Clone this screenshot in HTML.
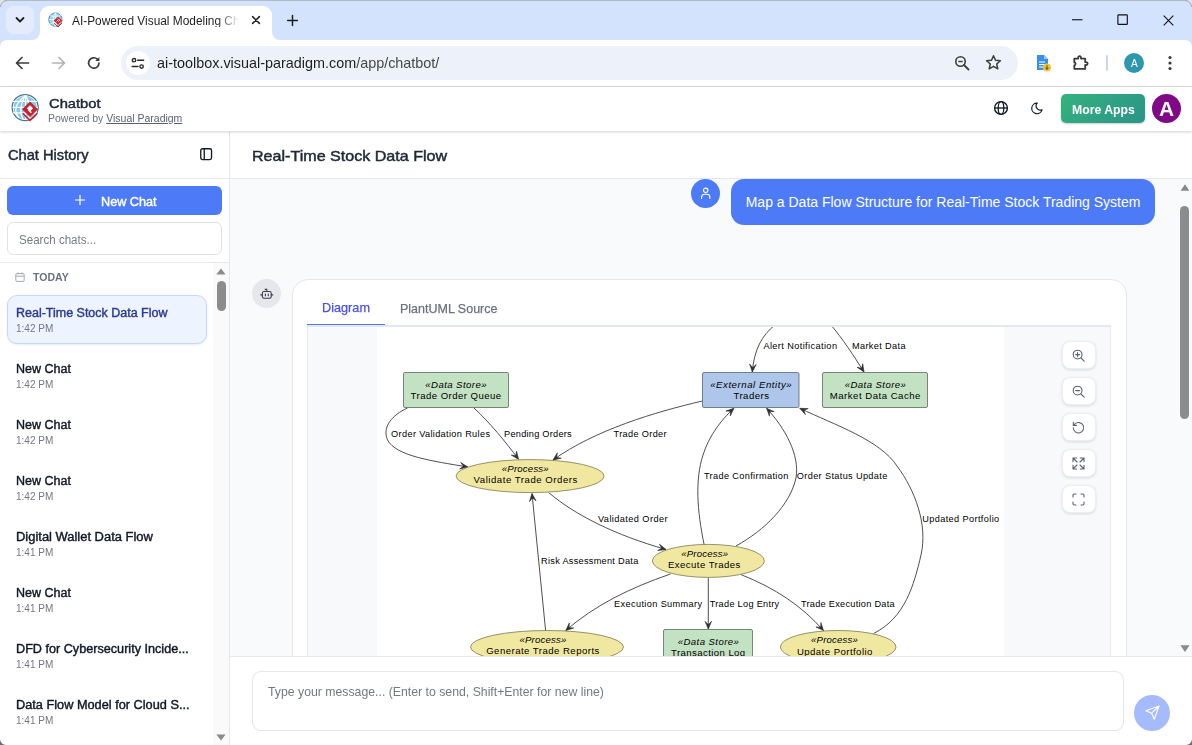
<!DOCTYPE html>
<html><head><meta charset="utf-8">
<style>
*{box-sizing:border-box;margin:0;padding:0}
html,body{width:1192px;height:745px;overflow:hidden;background:#fff;font-family:"Liberation Sans",sans-serif;color:#1f2937}
.abs{position:absolute}
.t{position:absolute;white-space:nowrap;line-height:1;transform-origin:0 50%}
svg{position:absolute;overflow:visible}
#tabstrip{left:0;top:0;width:1192px;height:50px;background:#d3e3fd}
#toolbar{left:0;top:40px;width:1192px;height:47px;background:#fff;border-bottom:1px solid #d9dce1;border-radius:7px 7px 0 0}
#tab{left:40px;top:6px;width:232px;height:34px;background:#fff;border-radius:9px 9px 0 0}
#tabdd{left:6px;top:6px;width:28px;height:28px;background:#e4ecfb;border-radius:8px}
#omni{left:121px;top:46px;width:897px;height:34px;border-radius:17px;background:#edf2fa}
#omniic{left:126px;top:51px;width:24px;height:24px;border-radius:12px;background:#fff}
#apphdr{left:0;top:87px;width:1192px;height:44px;background:#fff;box-shadow:0 1px 3px rgba(0,0,0,.18)}
#sidebar{left:0;top:131px;width:230px;height:614px;background:#fff;border-right:1px solid #e5e7eb}
#main{left:230px;top:131px;width:962px;height:614px;background:#f9fafb}
#mainhdr{left:230px;top:131px;width:962px;height:48px;background:#fff;border-bottom:1px solid #e5e7eb}
#inputbar{left:230px;top:656px;width:962px;height:89px;background:#fff;border-top:1px solid #e5e7eb}
</style></head><body>
<!-- ===== browser chrome ===== -->
<div id="tabstrip" class="abs"></div>
<div id="tabdd" class="abs"></div>
<div class="abs" style="left:0;top:0;width:1192px;height:1px;background:#b4bac6"></div>
<div id="tab" class="abs"></div>
<!-- tab curved feet -->
<svg style="left:32px;top:32px" width="8" height="8"><path d="M8 0 V8 H0 A8 8 0 0 0 8 0Z" fill="#fff"/></svg>
<svg style="left:272px;top:32px" width="8" height="8"><path d="M0 0 V8 H8 A8 8 0 0 1 0 0Z" fill="#fff"/></svg>
<div id="toolbar" class="abs"></div>
<div id="omni" class="abs"></div>
<div id="omniic" class="abs"></div>
<!-- tab dropdown chevron -->
<svg style="left:15px;top:16px" width="10" height="8" viewBox="0 0 10 8"><path d="M1.5 2 L5 5.5 L8.5 2" fill="none" stroke="#1f1f1f" stroke-width="1.8" stroke-linecap="round" stroke-linejoin="round"/></svg>
<!-- favicon -->
<svg style="left:48px;top:12px" width="16" height="16" viewBox="0 0 16 16">
<circle cx="7.4" cy="7.6" r="6.7" fill="#93d3f5" stroke="#557f90" stroke-width=".8"/>
<path d="M.9 7.6H13.9M7.4 1V14.2M2.4 3.6Q7.4 6.4 12.4 3.6M2.4 11.6Q7.4 8.8 12.4 11.6M7.4 1Q2.6 7.6 7.4 14.2M7.4 1Q12.2 7.6 7.4 14.2" stroke="#fff" stroke-width=".7" fill="none"/>
<path d="M10 4.4 L14.3 8.6 L10 12.8 L5.7 8.6Z" fill="#cf2630"/>
<path d="M6.3 11.4 L10 15 L14 11.1" stroke="#cf2630" stroke-width="1" fill="none"/>
<path d="M10 6.6L11.7 8.3L10.6 9.4L9.6 8.4L8.6 9.4" stroke="#fff" stroke-width=".9" fill="none"/>
</svg>
<!-- tab close -->
<svg style="left:251.7px;top:16.4px" width="8" height="8" viewBox="0 0 8 8"><path d="M.6 .6L7.4 7.4M7.4 .6L.6 7.4" stroke="#1f1f1f" stroke-width="1.5" stroke-linecap="round"/></svg>
<!-- new tab plus -->
<svg style="left:286.5px;top:14.9px" width="11" height="11" viewBox="0 0 11 11"><path d="M5.5 .6V10.4M.6 5.5H10.4" stroke="#1f1f1f" stroke-width="1.5" stroke-linecap="round"/></svg>
<!-- window controls -->
<svg style="left:1071.5px;top:19px" width="11" height="2"><rect width="10.5" height="1.1" y=".2" fill="#111"/></svg>
<svg style="left:1117px;top:14px" width="11" height="11" viewBox="0 0 11 11"><rect x=".9" y=".9" width="9.4" height="9.4" rx=".6" fill="none" stroke="#111" stroke-width="1.15"/></svg>
<svg style="left:1163.4px;top:14.5px" width="11" height="11" viewBox="0 0 11 11"><path d="M.7 .7L10.3 10.3M10.3 .7L.7 10.3" stroke="#111" stroke-width="1.1"/></svg>
<!-- nav buttons -->
<svg style="left:15px;top:56px" width="15" height="14" viewBox="0 0 15 14"><path d="M13.5 7H2M7 1.5L1.5 7L7 12.5" fill="none" stroke="#3c3c3c" stroke-width="1.7" stroke-linecap="round" stroke-linejoin="round"/></svg>
<svg style="left:51px;top:56px" width="15" height="14" viewBox="0 0 15 14"><path d="M1.5 7H13M8 1.5L13.5 7L8 12.5" fill="none" stroke="#b4b4b4" stroke-width="1.7" stroke-linecap="round" stroke-linejoin="round"/></svg>
<svg style="left:87px;top:56px" width="14" height="14" viewBox="0 0 14 14"><path d="M12 7A5.2 5.2 0 1 1 10.3 3.1" fill="none" stroke="#3c3c3c" stroke-width="1.7" stroke-linecap="round"/><path d="M8.3 3.6H12.4V-.3Z" fill="#3c3c3c" transform="translate(0,1.4)"/></svg>
<!-- site info icon -->
<svg style="left:130.5px;top:56.5px" width="14" height="13" viewBox="0 0 14 13"><path d="M6.6 3.2H12.6M1.2 9.6H7" stroke="#2b2b2b" stroke-width="1.5" stroke-linecap="round"/><circle cx="3" cy="3.2" r="1.7" fill="none" stroke="#2b2b2b" stroke-width="1.4"/><circle cx="10.6" cy="9.6" r="1.7" fill="none" stroke="#2b2b2b" stroke-width="1.4"/></svg>
<!-- zoom-out magnifier -->
<svg style="left:954px;top:55px" width="16" height="16" viewBox="0 0 16 16"><circle cx="6.5" cy="6.5" r="4.7" fill="none" stroke="#3c3c3c" stroke-width="1.6"/><path d="M10 10L14.5 14.5" stroke="#3c3c3c" stroke-width="1.8" stroke-linecap="round"/><path d="M4.3 6.5H8.7" stroke="#3c3c3c" stroke-width="1.4"/></svg>
<!-- star -->
<svg style="left:985px;top:54px" width="17" height="17" viewBox="0 0 17 17"><path d="M8.5 1.8L10.5 6.3L15.4 6.8L11.7 10L12.8 14.8L8.5 12.3L4.2 14.8L5.3 10L1.6 6.8L6.5 6.3Z" fill="none" stroke="#3c3c3c" stroke-width="1.5" stroke-linejoin="round"/></svg>
<!-- extension doc icon -->
<svg style="left:1035px;top:54px" width="17" height="18" viewBox="0 0 17 18"><path d="M2 1H9L13 5V16H2Z" fill="#3b8ee8"/><path d="M9 1V5H13Z" fill="#9cc8f5"/><path d="M4 8H10M4 10.5H10M4 13H8" stroke="#fff" stroke-width="1"/><circle cx="12" cy="13.5" r="4" fill="#f6c433"/><path d="M12 11.3V15.2M10.3 13.7L12 15.4L13.7 13.7" stroke="#3c3c3c" stroke-width="1" fill="none"/></svg>
<!-- puzzle -->
<svg style="left:1072px;top:53px" width="18" height="18" viewBox="0 0 18 18"><path d="M2.3 5.6H6.2C5.7 2.3 9.5 2.3 9 5.6H13.2V9.2C16.4 8.7 16.4 12.5 13.2 12V15.8H2.3V12.3C4 12.3 4 9.4 2.3 9.4Z" fill="none" stroke="#3a3a3a" stroke-width="1.8" stroke-linejoin="round"/></svg>
<div class="abs" style="left:1106px;top:55px;width:2px;height:16px;background:#c7d6f3;border-radius:1px"></div>
<div class="abs" style="left:1124px;top:53px;width:20px;height:20px;border-radius:10px;background:#2f97ad"></div>
<svg style="left:1168px;top:55px" width="4" height="16" viewBox="0 0 4 16"><circle cx="2" cy="2.5" r="1.6" fill="#3c3c3c"/><circle cx="2" cy="8" r="1.6" fill="#3c3c3c"/><circle cx="2" cy="13.5" r="1.6" fill="#3c3c3c"/></svg>
<!-- ===== app ===== -->
<div id="sidebar" class="abs"></div>
<div id="main" class="abs"></div>
<div id="mainhdr" class="abs"></div>
<div id="apphdr" class="abs"></div>
<!-- logo -->
<svg style="left:8px;top:90px" width="36" height="36" viewBox="0 0 36 36">
<circle cx="17.15" cy="17.5" r="13" fill="#fff" stroke="#4d7789" stroke-width="1.25"/>
<circle cx="17.15" cy="17.5" r="11.6" fill="#86caf3"/>
<path d="M5 11.4H29M4.5 17.3H30M5 22.8H29M17.6 5.5V29.5M17.6 5.5Q9.5 17.5 15 29.5M17.6 5.5Q2 17.5 11 28M17.6 5.5Q25 17.5 20 29.5" stroke="#fff" stroke-width="1.3" fill="none"/>
<path d="M22 11.4 L29.95 19.3 L22 27.1 L14.05 19.3Z" fill="#c8232c"/>
<path d="M14.7 23.3 L22 30.4 L29.3 23.3" stroke="#c8232c" stroke-width="1.6" fill="none"/>
<path d="M22 15.2 L25.1 18.3 L22 21.4 L18.9 18.3Z" fill="#fff"/>
<path d="M20.6 19.9 L23.4 22.7" stroke="#fff" stroke-width="1.5"/>
</svg>
<!-- globe -->
<svg style="left:993px;top:100px" width="16" height="16" viewBox="0 0 16 16"><circle cx="8" cy="8" r="6.4" fill="none" stroke="#111827" stroke-width="1.4"/><ellipse cx="8" cy="8" rx="2.8" ry="6.4" fill="none" stroke="#111827" stroke-width="1.3"/><path d="M1.6 8H14.4" stroke="#111827" stroke-width="1.3"/></svg>
<!-- moon -->
<svg style="left:1031px;top:102px" width="12.2" height="12.6" viewBox="0 0 14 15"><path d="M7.2 1.3A6.3 6.3 0 1 0 13 9.2A5 5 0 0 1 7.2 1.3Z" fill="none" stroke="#111827" stroke-width="1.4" stroke-linejoin="round"/></svg>
<div class="abs" style="left:1061px;top:94px;width:84px;height:29px;border-radius:5px;background:linear-gradient(135deg,#34b27d,#2a9488);box-shadow:0 1px 2px rgba(0,0,0,.2)"></div>
<div class="abs" style="left:1152px;top:94px;width:29px;height:29px;border-radius:15px;background:#800a86"></div>
<!-- sidebar header -->
<svg style="left:200px;top:148.2px" width="12.3" height="12.3" viewBox="0 0 13 13"><rect x=".8" y=".8" width="11.4" height="11.4" rx="1.8" fill="none" stroke="#111827" stroke-width="1.4"/><path d="M4.5 .8V12.2" stroke="#111827" stroke-width="1.4"/></svg>
<div class="abs" style="left:0;top:178px;width:229px;height:1px;background:#e5e7eb"></div>
<div class="abs" style="left:7px;top:186px;width:215px;height:29px;border-radius:6px;background:#4d7bf7"></div>
<svg style="left:75px;top:195px" width="10" height="10" viewBox="0 0 10 10"><path d="M5 0V10M0 5H10" stroke="#fff" stroke-width="1.2"/></svg>
<div class="abs" style="left:7px;top:222px;width:215px;height:33px;border-radius:6px;border:1px solid #dfe2e7;background:#fff"></div>
<div class="abs" style="left:0;top:262px;width:229px;height:1px;background:#e5e7eb"></div>
<!-- today -->
<svg style="left:14.5px;top:272px" width="10" height="10" viewBox="0 0 10 10"><rect x=".8" y="1.6" width="8.4" height="7.8" rx="1.1" fill="none" stroke="#9aa1ad" stroke-width=".9"/><path d="M.8 4.2H9.2M3 .4V2.4M7 .4V2.4" stroke="#9aa1ad" stroke-width=".9"/></svg>
<!-- sidebar scrollbar -->
<div class="abs" style="left:213px;top:263px;width:16px;height:482px;background:#fafafa"></div>
<svg style="left:216px;top:268px" width="10" height="7"><path d="M5 .5L9.6 6.5H.4Z" fill="#8a8a8a"/></svg>
<div class="abs" style="left:216.5px;top:281px;width:9px;height:30px;border-radius:4.5px;background:#8c8c8c"></div>
<svg style="left:216px;top:734px" width="10" height="7"><path d="M5 6.5L9.6 .5H.4Z" fill="#8a8a8a"/></svg>
<!-- chat list -->
<div class="abs" style="left:7px;top:295px;width:200px;height:49px;border-radius:10px;background:#eef4ff;border:1px solid #c6d6fa;box-shadow:0 1px 2px rgba(60,90,200,.12)"></div>
<!-- main header -->
<!-- ===== chat area ===== -->
<!-- user avatar + bubble -->
<div class="abs" style="left:691px;top:179px;width:29px;height:29px;border-radius:15px;background:#4d7bf7"></div>
<svg style="left:699.7px;top:187px" width="11.4" height="12.3" viewBox="0 0 13 14"><circle cx="6.5" cy="3.7" r="2.5" fill="none" stroke="#fff" stroke-width="1.3"/><path d="M1.8 13V11.5A3.2 3.2 0 0 1 5 8.3H8A3.2 3.2 0 0 1 11.2 11.5V13" fill="none" stroke="#fff" stroke-width="1.3" stroke-linecap="round"/></svg>
<div class="abs" style="left:731px;top:179px;width:424px;height:46px;border-radius:13px;background:#4d7bf7"></div>
<!-- bot avatar -->
<div class="abs" style="left:252px;top:279px;width:29px;height:29px;border-radius:15px;background:#e5e7eb"></div>
<svg style="left:259.7px;top:287px" width="13.6" height="13.6" viewBox="0 0 15 15"><rect x="2.6" y="5" width="9.8" height="7.4" rx="1.8" fill="none" stroke="#374151" stroke-width="1.2"/><path d="M7.5 5V2.6H5.6M.9 8.7H2.6M12.4 8.7H14.1M5.9 7.8V9.6M9.1 7.8V9.6" stroke="#374151" stroke-width="1.2" fill="none" stroke-linecap="round"/></svg>
<!-- card -->
<div class="abs" style="left:292px;top:279px;width:835px;height:420px;border-radius:16px;background:#fff;border:1px solid #e6e8ec;box-shadow:0 1px 2px rgba(0,0,0,.04)"></div>
<div class="abs" style="left:307px;top:325px;width:804px;height:2px;background:#e4e6f0"></div>
<div class="abs" style="left:307px;top:323.6px;width:78px;height:1.8px;background:#4d7bf7"></div>
<!-- diagram container -->
<div class="abs" style="left:307px;top:327px;width:804px;height:360px;background:#f8f9fb;border-left:1px solid #e9ebf0;border-right:1px solid #e9ebf0"></div>
<div class="abs" style="left:377px;top:327px;width:627px;height:360px;background:#fff"></div>
<svg id="dg" style="left:307px;top:327px;overflow:hidden" width="803" height="329" viewBox="307 327 803 329" font-family="Liberation Sans, sans-serif" fill="#000">
<defs><marker id="ah" viewBox="-9 -4.5 10 9" markerWidth="10" markerHeight="9" refX="0" refY="0" orient="auto" markerUnits="userSpaceOnUse"><path d="M0 0L-7.7 -3.3L-4.4 0L-7.7 3.3Z" fill="#303030" stroke="#303030" stroke-width=".6" stroke-linejoin="miter"/></marker></defs>
<g fill="none" stroke="#404040" stroke-width=".92" marker-end="url(#ah)">
<path d="M775 325C762 335 754 350 752.3 372"/>
<path d="M831 325C842 338 854 356 864 372"/>
<path d="M407.5 408C392 415 382 427 387.5 440C396 456 432 461 467.8 467"/>
<path d="M474 408C490 423 505 441 518.5 459.3"/>
<path d="M702.5 401C655 412 595 430 553 460"/>
<path d="M548.7 492.6C575 515 615 535 666 549.5"/>
<path d="M545.6 630.5L532 493.5"/>
<path d="M704.1 544.5C697 510 695 480 703 455C709 436 721 420 733.8 408.3"/>
<path d="M735.9 546C765 530 790 505 796 478C800 455 785 428 766.6 408.3"/>
<path d="M873.5 633.5C905 618 914 585 921 555C928 525 915 490 897 466C880 440 835 425 799.8 408.3"/>
<path d="M670.5 574C630 588 595 605 565.7 630.6"/>
<path d="M708.3 577.5L708.3 629"/>
<path d="M741 574.6C775 588 802 606 823.5 630.6"/>
</g>
<g stroke="#5d6b5d" stroke-width=".8">
<rect x="403.5" y="372.5" width="105" height="35" rx="1.5" fill="#c3e2c3"/>
<rect x="822.5" y="372.5" width="105" height="35" rx="1.5" fill="#c3e2c3"/>
<rect x="663.5" y="629.5" width="89" height="35" rx="1.5" fill="#c3e2c3"/>
<rect x="702.5" y="372.5" width="96.5" height="35" rx="1.5" fill="#adc6e9" stroke="#56657a"/>
<g fill="#f0e8a0" stroke="#7d7850">
<ellipse cx="530.1" cy="476.1" rx="74" ry="16.5"/>
<ellipse cx="708.4" cy="560.9" rx="56" ry="16.5"/>
<ellipse cx="547" cy="647" rx="76.5" ry="16.5"/>
<ellipse cx="838.2" cy="647" rx="57.8" ry="16.5"/>
</g></g>
<g font-size="9.6">
<g font-style="italic">
<text x="425.3" y="387.5" textLength="61.2">«Data Store»</text>
<text x="844.7" y="387.5" textLength="61.2">«Data Store»</text>
<text x="677.7" y="644.5" textLength="61.2">«Data Store»</text>
<text x="710.2" y="387.5" textLength="81.4">«External Entity»</text>
<text x="501.8" y="471.7" textLength="46.9">«Process»</text>
<text x="681.2" y="556.5" textLength="46.9">«Process»</text>
<text x="519.4" y="643.1" textLength="46.9">«Process»</text>
<text x="811" y="643.4" textLength="46.9">«Process»</text>
</g>
<text x="410.6" y="398.9" textLength="90.6">Trade Order Queue</text>
<text x="829.8" y="398.9" textLength="90.6">Market Data Cache</text>
<text x="671.1" y="655.6" textLength="74.1">Transaction Log</text>
<text x="733.4" y="398.9" textLength="35.6">Traders</text>
<text x="473.6" y="482.9" textLength="103.7">Validate Trade Orders</text>
<text x="667.9" y="567.7" textLength="72.5">Execute Trades</text>
<text x="486.2" y="654.1" textLength="113.1">Generate Trade Reports</text>
<text x="796.9" y="654.6" textLength="75.5">Update Portfolio</text>
</g>
<g font-size="9.2">
<text x="763.4" y="349.2" textLength="73.6">Alert Notification</text>
<text x="852" y="349.2" textLength="53.5">Market Data</text>
<text x="391.1" y="436.8" textLength="98.9">Order Validation Rules</text>
<text x="504" y="436.8" textLength="67.7">Pending Orders</text>
<text x="613.6" y="436.8" textLength="53">Trade Order</text>
<text x="703.9" y="479" textLength="84.4">Trade Confirmation</text>
<text x="796.8" y="479" textLength="90.5">Order Status Update</text>
<text x="598" y="522" textLength="69.5">Validated Order</text>
<text x="922.2" y="522" textLength="77">Updated Portfolio</text>
<text x="541.1" y="564.2" textLength="97.2">Risk Assessment Data</text>
<text x="614.1" y="607" textLength="88">Execution Summary</text>
<text x="709.7" y="607" textLength="69.5">Trade Log Entry</text>
<text x="801" y="607" textLength="93.6">Trade Execution Data</text>
</g>
</svg>
<!-- tool buttons -->
<style>.tb{position:absolute;left:1062px;width:34px;height:28px;border-radius:8px;background:#fff;border:1px solid #eceef2;box-shadow:0 1px 3px rgba(0,0,0,.12)}</style>
<div class="tb" style="top:341px"></div><div class="tb" style="top:377px"></div><div class="tb" style="top:413px"></div><div class="tb" style="top:449px"></div><div class="tb" style="top:485px"></div>
<g>
<svg style="left:1072px;top:349px" width="13" height="13" viewBox="0 0 13 13" fill="none" stroke="#5b6472" stroke-width="1.1" stroke-linecap="round"><circle cx="5.6" cy="5.6" r="4.4"/><path d="M9 9L12.2 12.2M3.6 5.6H7.6M5.6 3.6V7.6"/></svg>
<svg style="left:1072px;top:385px" width="13" height="13" viewBox="0 0 13 13" fill="none" stroke="#5b6472" stroke-width="1.1" stroke-linecap="round"><circle cx="5.6" cy="5.6" r="4.4"/><path d="M9 9L12.2 12.2M3.6 5.6H7.6"/></svg>
<svg style="left:1072px;top:421px" width="13" height="13" viewBox="0 0 13 13" fill="none" stroke="#5b6472" stroke-width="1.1" stroke-linecap="round" stroke-linejoin="round"><path d="M1.3 6.8A5.2 5.2 0 1 0 3 2.9L1.3 4.4M1.3 1.2V4.4H4.5"/></svg>
<svg style="left:1072px;top:457px" width="13" height="13" viewBox="0 0 13 13" fill="none" stroke="#5b6472" stroke-width="1.1" stroke-linecap="round" stroke-linejoin="round"><path d="M8.3 1H12V4.7M12 1L8 5M4.7 12H1V8.3M1 12L5 8M1 4.7V1H4.7M1 1L5 5M12 8.3V12H8.3M12 12L8 8"/></svg>
<svg style="left:1072px;top:493px" width="13" height="13" viewBox="0 0 13 13" fill="none" stroke="#5b6472" stroke-width="1.1" stroke-linecap="round" stroke-linejoin="round"><path d="M1 4V2.2A1.2 1.2 0 0 1 2.2 1H4M9 1H10.8A1.2 1.2 0 0 1 12 2.2V4M12 9V10.8A1.2 1.2 0 0 1 10.8 12H9M4 12H2.2A1.2 1.2 0 0 1 1 10.8V9"/></svg>
</g>
<!-- main scrollbar -->
<svg style="left:1180px;top:184px" width="10" height="7"><path d="M5 .3L9.4 6.8H.6Z" fill="#8a8a8a"/></svg>
<div class="abs" style="left:1180px;top:206px;width:9px;height:213px;border-radius:4.5px;background:#8c8c8c"></div>
<svg style="left:1179.5px;top:645px" width="10" height="7"><path d="M5 6.9L9.6 .2H.4Z" fill="#8a8a8a"/></svg>
<!-- input bar -->
<div id="inputbar" class="abs"></div>
<div class="abs" style="left:252px;top:671px;width:872px;height:60px;border-radius:9px;border:1px solid #e3e6ea;background:#fff"></div>
<div class="abs" style="left:1134px;top:695px;width:36px;height:36px;border-radius:18px;background:#a5bbfd"></div>
<svg style="left:1145px;top:704.5px" width="15" height="15" viewBox="0 0 15 15" fill="none" stroke="#fff" stroke-width="1.1" stroke-linejoin="round" stroke-linecap="round"><path d="M14 1L6.6 8.2M14 1L9.3 14.2L6.6 8.2L.8 5.8Z"/></svg>
<svg style="left:0;top:0;z-index:9" width="7" height="7"><path d="M0 0H7A7 7 0 0 0 0 7Z" fill="#e4e4e4"/><path d="M7 .5A6.5 6.5 0 0 0 .5 7" fill="none" stroke="#a6a9af" stroke-width="1"/></svg>
<svg style="left:1185px;top:0;z-index:9" width="7" height="7"><path d="M7 0H0A7 7 0 0 1 7 7Z" fill="#e4e4e4"/><path d="M0 .5A6.5 6.5 0 0 1 6.5 7" fill="none" stroke="#a6a9af" stroke-width="1"/></svg>
<svg style="left:0;top:739px;z-index:9" width="6" height="6"><path d="M0 6H6A6 6 0 0 1 0 0Z" fill="#6b6d72"/></svg>
<svg style="left:1186px;top:739px;z-index:9" width="6" height="6"><path d="M6 6H0A6 6 0 0 0 6 0Z" fill="#6b6d72"/></svg>

<!-- text -->
<div class="t" style="left:72.2px;top:14.7px;font-size:12px;color:#1f1f1f;transform:scaleX(0.990);width:169px;overflow:hidden;-webkit-mask-image:linear-gradient(90deg,#000 87%,transparent 100%);">AI-Powered Visual Modeling Chatbot</div>
<div class="t" style="left:157.4px;top:55.7px;font-size:14.6px;color:#1f1f1f;transform:scaleX(0.986);">ai-toolbox.visual-paradigm.com<span style="color:#474747">/app/chatbot/</span></div>
<div class="t" style="left:1130.5px;top:57.7px;font-size:10.5px;color:#fff;transform:scaleX(0.969);">A</div>
<div class="t" style="left:48.6px;top:97.0px;font-size:13.2px;-webkit-text-stroke:.46px #1f2937;color:#1f2937;transform:scaleX(1.117);">Chatbot</div>
<div class="t" style="left:48.3px;top:112.7px;font-size:10.6px;color:#6b7280;transform:scaleX(0.989);">Powered by <span style="text-decoration:underline;color:#5b6275">Visual Paradigm</span></div>
<div class="t" style="left:1071.9px;top:103.6px;font-size:12px;font-weight:700;color:#fff;transform:scaleX(1.020);">More Apps</div>
<div class="t" style="left:1158.7px;top:98.5px;font-size:20.5px;font-weight:700;color:#fff;transform:scaleX(1.019);">A</div>
<div class="t" style="left:7.8px;top:149.2px;font-size:13.8px;-webkit-text-stroke:.46px #1f2937;color:#1f2937;transform:scaleX(1.061);">Chat History</div>
<div class="t" style="left:100.7px;top:195.5px;font-size:12px;-webkit-text-stroke:.4px #fff;color:#fff;transform:scaleX(1.055);">New Chat</div>
<div class="t" style="left:19.3px;top:233.8px;font-size:12.5px;color:#777b84;transform:scaleX(0.926);">Search chats...</div>
<div class="t" style="left:32.8px;top:271.6px;font-size:11px;font-weight:700;color:#6b7280;transform:scaleX(0.957);">TODAY</div>
<div class="t" style="left:251.9px;top:148.9px;font-size:14.3px;-webkit-text-stroke:.46px #1f2937;color:#1f2937;transform:scaleX(1.125);">Real-Time Stock Data Flow</div>
<div class="t" style="left:745.7px;top:195.2px;font-size:14px;color:#fff;">Map a Data Flow Structure for Real-Time Stock Trading System</div>
<div class="t" style="left:322.1px;top:302.1px;font-size:12.9px;color:#4b50e6;transform:scaleX(0.985);-webkit-text-stroke:.25px #4b50e6;">Diagram</div>
<div class="t" style="left:399.7px;top:303.0px;font-size:12.9px;color:#6b7280;transform:scaleX(0.969);-webkit-text-stroke:.25px #6b7280;">PlantUML Source</div>
<div class="t" style="left:267.9px;top:686.4px;font-size:12.9px;color:#747881;transform:scaleX(0.952);">Type your message... (Enter to send, Shift+Enter for new line)</div>
<div class="t" style="left:16.2px;top:306.5px;font-size:12px;-webkit-text-stroke:.4px #2c3a8f;color:#2c3a8f;transform:scaleX(1.040);">Real-Time Stock Data Flow</div>
<div class="t" style="left:16.2px;top:322.7px;font-size:11px;color:#737780;transform:scaleX(0.910);">1:42 PM</div>
<div class="t" style="left:16.2px;top:362.5px;font-size:12px;-webkit-text-stroke:.4px #111827;color:#111827;transform:scaleX(1.042);">New Chat</div>
<div class="t" style="left:16.2px;top:378.7px;font-size:11px;color:#737780;transform:scaleX(0.910);">1:42 PM</div>
<div class="t" style="left:16.2px;top:418.5px;font-size:12px;-webkit-text-stroke:.4px #111827;color:#111827;transform:scaleX(1.042);">New Chat</div>
<div class="t" style="left:16.2px;top:434.7px;font-size:11px;color:#737780;transform:scaleX(0.910);">1:42 PM</div>
<div class="t" style="left:16.2px;top:474.5px;font-size:12px;-webkit-text-stroke:.4px #111827;color:#111827;transform:scaleX(1.042);">New Chat</div>
<div class="t" style="left:16.2px;top:490.7px;font-size:11px;color:#737780;transform:scaleX(0.910);">1:42 PM</div>
<div class="t" style="left:16.2px;top:530.5px;font-size:12px;-webkit-text-stroke:.4px #111827;color:#111827;transform:scaleX(1.078);">Digital Wallet Data Flow</div>
<div class="t" style="left:16.2px;top:546.7px;font-size:11px;color:#737780;transform:scaleX(0.910);">1:41 PM</div>
<div class="t" style="left:16.2px;top:586.5px;font-size:12px;-webkit-text-stroke:.4px #111827;color:#111827;transform:scaleX(1.042);">New Chat</div>
<div class="t" style="left:16.2px;top:602.7px;font-size:11px;color:#737780;transform:scaleX(0.910);">1:41 PM</div>
<div class="t" style="left:16.2px;top:642.5px;font-size:12px;-webkit-text-stroke:.4px #111827;color:#111827;transform:scaleX(1.053);">DFD for Cybersecurity Incide...</div>
<div class="t" style="left:16.2px;top:658.7px;font-size:11px;color:#737780;transform:scaleX(0.910);">1:41 PM</div>
<div class="t" style="left:16.2px;top:698.5px;font-size:12px;-webkit-text-stroke:.4px #111827;color:#111827;transform:scaleX(1.062);">Data Flow Model for Cloud S...</div>
<div class="t" style="left:16.2px;top:714.7px;font-size:11px;color:#737780;transform:scaleX(0.910);">1:41 PM</div>
</body></html>
